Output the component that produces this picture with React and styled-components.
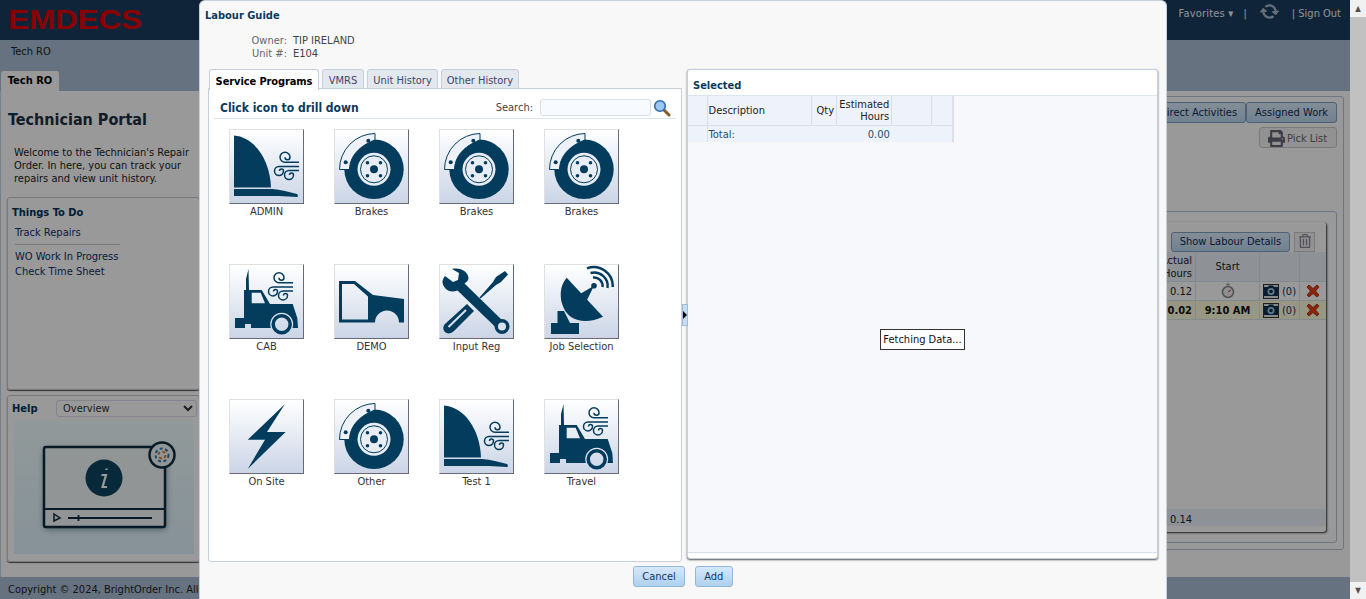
import { FaPrint, FaSyncAlt, FaRegTrashAlt } from 'react-icons/fa'
import styled, { createGlobalStyle } from 'styled-components'

const NAVY = '#033c5c'
const FONT = `"DejaVu Sans Condensed", "DejaVu Sans", sans-serif`

const Wind = ({ x = 0, y = 0 }) => (
	<g transform={`translate(${x} ${y})`} fill="none" stroke={NAVY} strokeWidth="1.5">
		<path d="M70 33.3H56a5 5 0 1 1 5-5a2.5 2.5 0 0 1-5 0" />
		<path d="M70 37.5H50a4.5 4.5 0 1 0 4.5 4.5a2 2 0 0 0-4 0" />
		<path d="M70 41.5H60a4.5 4.5 0 1 0 4.5 4.5a2 2 0 0 0-4 0" />
	</g>
)

const Fairing = () => (
	<>
		<path d="M5 6.5C25 8 41 30 42 58.5H5Z" />
		<path d="M5 60H43C52 60.500 60 63 68 65Q70 67 68 68L50 67H5Z" />
		<Wind />
	</>
)

const Brake = () => (
	<>
		<circle cx="40" cy="40.300" r="29.700" />
		<circle cx="40" cy="40.300" r="16.500" fill="#e8edf5" />
		<circle cx="40" cy="40.300" r="13.500" fill="none" stroke={NAVY} strokeWidth="1" />
		<circle cx="40" cy="40.300" r="4" />
		<circle cx="33.500" cy="33.800" r="1.800" />
		<circle cx="46.500" cy="33.800" r="1.800" />
		<circle cx="33.500" cy="46.800" r="1.800" />
		<circle cx="46.500" cy="46.800" r="1.800" />
		<path
			d="M5.500 40.500A36 36 0 0 1 41 4.500V11C30 15 16 24 15.500 40.500Z"
			fill="#eef2f8"
			stroke={NAVY}
			strokeWidth="1"
		/>
		<circle cx="34.300" cy="11.700" r="2" />
		<circle cx="11.700" cy="33.300" r="2" />
	</>
)

const Truck = () => (
	<>
		<path
			fillRule="evenodd"
			d="M17 15L19.500 5L20 26H32.700L41 40H63.700L68.300 54L69 64H63.600A11.500 11.500 0 1 0 41.800 64H22V60H16V64H6V54H15V26H17ZM22.700 28.700V39.300H36L31.700 28.700Z"
		/>
		<circle cx="52.700" cy="60.300" r="8.500" fill="none" stroke={NAVY} strokeWidth="3.500" />
		<Wind x={-6} y={-14.600} />
	</>
)

const Door = () => (
	<path
		fillRule="evenodd"
		d="M5 17H21L39 31L70 35V58.500H65A12 12 0 0 0 41 58.500H5ZM8 20V55.500H34V32.500L20 20Z"
	/>
)

const Tools = () => (
	<>
		<path d="M6 12L14 18L19 16L20 9L13 5C22 3 29 8 29.500 14C29.500 16 28 18 25.500 19.500L66 59L59.500 66L18.500 26.500C10 30 4 24 3.500 18C3.500 16 4.500 14 6 12Z" />
		<circle cx="63" cy="62.500" r="7.500" />
		<circle cx="63" cy="62.500" r="4" fill="#dbe2ee" />
		<path d="M66 7L69 10.500L62 18L57 21L41.500 34.500L40.500 33.500L54 18L57 13Z" />
		<path d="M28 40L35 47L15 67C12 70 8 70 6 68C3.500 65.500 4 62 6 60Z" />
		<path d="M27 46L9.500 63" stroke="#dbe2ee" strokeWidth="2" />
	</>
)

const Dish = () => (
	<>
		<path d="M22.700 13.700L59 52.700C48 58 36 59 27 53C17 46 12 26 22.700 13.700Z" />
		<path d="M34 34L36 30L50 21.700L43 36L39 40Z" />
		<circle cx="50" cy="21.700" r="2.800" />
		<g fill="none" stroke={NAVY} strokeWidth="2.500">
			<path d="M49 13.500A8.500 8.500 0 0 1 58.500 23" />
			<path d="M46.500 9A13.500 13.500 0 0 1 63.500 24" />
			<path d="M43 4.300A19 19 0 0 1 68.700 23" />
		</g>
		<path d="M13.500 47H20L26 59H35V70H7V59H13.500Z" />
	</>
)

const Bolt = () => <path d="M56 5L18.700 40.700H36L18.700 70L56.600 33H38Z" />

const ICONS = { Fairing, Brake, Truck, Door, Tools, Dish, Bolt }

const PROGRAMS = [
	{ label: 'ADMIN', icon: 'Fairing' },
	{ label: 'Brakes', icon: 'Brake' },
	{ label: 'Brakes', icon: 'Brake' },
	{ label: 'Brakes', icon: 'Brake' },
	{ label: 'CAB', icon: 'Truck' },
	{ label: 'DEMO', icon: 'Door' },
	{ label: 'Input Reg', icon: 'Tools' },
	{ label: 'Job Selection', icon: 'Dish' },
	{ label: 'On Site', icon: 'Bolt' },
	{ label: 'Other', icon: 'Brake' },
	{ label: 'Test 1', icon: 'Fairing' },
	{ label: 'Travel', icon: 'Truck' },
]

function Program({ label, icon }) {
	const Icon = ICONS[icon]
	return (
		<ProgramItem>
			<Tile>
				<svg width="73" height="73" viewBox="1 1 73 73" fill={NAVY}>
					<Icon />
				</svg>
			</Tile>
			<ProgramLabel>{label}</ProgramLabel>
		</ProgramItem>
	)
}

const CameraIcon = () => (
	<svg width="16" height="15" viewBox="0 0 16 15">
		<rect x="0.500" y="0.500" width="15" height="14" fill="#dfe3e8" stroke="#333" />
		<path d="M1 3H5L6 1.500H10L11 3H15V12H1Z" fill="#0b3350" />
		<circle cx="8" cy="7.500" r="3.500" fill="#a8c8e0" />
		<circle cx="8" cy="7.500" r="1.800" fill="#0b3350" />
	</svg>
)

const RedX = () => (
	<svg width="16" height="16" viewBox="0 0 16 16">
		<path
			d="M2 4L4 2L8 5.500L12 2L14 4L10.500 8L14 12L12 14L8 10.500L4 14L2 12L5.500 8Z"
			fill="#f03a10"
			stroke="#8a2a10"
			strokeWidth="0.800"
		/>
	</svg>
)

const Stopwatch = () => (
	<svg width="14" height="16" viewBox="0 0 14 16" fill="none">
		<rect x="5.500" y="0.500" width="3" height="2" fill="#999" />
		<circle cx="7" cy="9" r="5.500" fill="#eee" stroke="#888" strokeWidth="1.500" />
		<path d="M7 9L10 7" stroke="#c33" />
	</svg>
)

const Magnifier = () => (
	<svg width="18" height="18" viewBox="0 0 18 18">
		<path d="M10.500 10.500L16 16" stroke="#8a5a2a" strokeWidth="3" strokeLinecap="round" />
		<circle cx="7" cy="7" r="5.300" fill="#9cc8f0" stroke="#2a6cb0" strokeWidth="1.600" />
	</svg>
)

const HelpArt = () => (
	<svg width="180" height="134" viewBox="0 0 180 134">
		<defs>
			<linearGradient id="helpBg" x1="0" y1="0" x2="0" y2="1">
				<stop offset="0" stopColor="#f2ffff" />
				<stop offset="1" stopColor="#e0f4ff" />
			</linearGradient>
			<filter id="helpShadow" x="-20%" y="-20%" width="140%" height="140%">
				<feGaussianBlur stdDeviation="3" />
			</filter>
		</defs>
		<rect width="180" height="134" fill="url(#helpBg)" />
		<rect x="30" y="29" width="122" height="80" rx="2" fill="#0d2a3a" opacity="0.5" filter="url(#helpShadow)" />
		<rect x="30" y="27" width="121" height="80" rx="2" fill="#f4f8f8" stroke="#0e2c40" strokeWidth="2.500" />
		<path d="M30 89H151" stroke="#0e2c40" strokeWidth="2" />
		<circle cx="90" cy="58" r="18.500" fill="#0e4560" />
		<path d="M92.500 48.500v1.500M87.500 55H92L88.500 67H93" fill="none" stroke="#fff" strokeWidth="2.200" />
		<path d="M40 94L46 98L40 101Z" fill="none" stroke="#0e2c40" strokeWidth="1.500" />
		<path d="M54 98H138M64.500 95V101" stroke="#0e2c40" strokeWidth="1.800" />
		<circle cx="148" cy="35" r="12.500" fill="#f4f8f8" stroke="#0e2c40" strokeWidth="2.500" />
		<g fill="none" strokeWidth="2" strokeDasharray="3 2.500">
			<circle cx="148" cy="35" r="6.500" stroke="#2a7fb0" />
			<circle cx="148" cy="35" r="3.500" stroke="#e07a30" />
		</g>
	</svg>
)

const COLS = [19, 104, 25, 55, 40, 21]

const EstimateRow = ({ cells, head }) => {
	const Cell = head ? HeadCell : BodyCell
	return (
		<tr>
			{cells.map((c, i) => (
				<Cell key={i} $w={COLS[i]} $left={i === 1}>
					{c}
				</Cell>
			))}
		</tr>
	)
}

export default function App() {
	return (
		<Page>
			<GlobalStyle />
			<Viewport>
				<Header>
					<Logo width="136" height="34" viewBox="0 0 136 34">
						<text x="0" y="25" textLength="134" lengthAdjust="spacingAndGlyphs">
							EMDECS
						</text>
					</Logo>
					<UserMenu>
						<Favorites>Favorites ▾</Favorites>
						<Pipe>|</Pipe>
						<SyncIcon size={15} />
						<SignOut>| Sign Out</SignOut>
					</UserMenu>
				</Header>
				<Nav>
					<NavLabel>Tech RO</NavLabel>
					<PageTab>Tech RO</PageTab>
				</Nav>
				<Content>
					<Sidebar>
						<PortalTitle>Technician Portal</PortalTitle>
						<Intro>
							Welcome to the Technician's Repair Order. In here, you can track your repairs and view unit
							history.
						</Intro>
						<TodoBox>
							<BoxTitle>Things To Do</BoxTitle>
							<TodoLink>Track Repairs</TodoLink>
							<TodoRule />
							<TodoLink>WO Work In Progress</TodoLink>
							<TodoLink>Check Time Sheet</TodoLink>
						</TodoBox>
						<HelpBox>
							<HelpHead>
								<BoxTitle>Help</BoxTitle>
								<HelpSelect defaultValue="Overview">
									<option>Overview</option>
								</HelpSelect>
							</HelpHead>
							<HelpArt />
						</HelpBox>
					</Sidebar>
					<Work>
						<WorkTabs>
							<WorkTab>Indirect Activities</WorkTab>
							<WorkTab>Assigned Work</WorkTab>
						</WorkTabs>
						<PickList>
							<FaPrint size={17} />
							Pick List
						</PickList>
						<Nested>
							<Card>
								<CardTools>
									<DetailsButton>Show Labour Details</DetailsButton>
									<TrashButton>
										<FaRegTrashAlt size={14} />
									</TrashButton>
								</CardTools>
								<WorkGrid $head>
									<ActualHead>
										Actual
										<br />
										Hours
									</ActualHead>
									<span>Start</span>
									<span />
									<span />
								</WorkGrid>
								<WorkGrid>
									<HoursCell>0.12</HoursCell>
									<span>
										<Stopwatch />
									</span>
									<PhotoCell>
										<CameraIcon /> (0)
									</PhotoCell>
									<span>
										<RedX />
									</span>
								</WorkGrid>
								<WorkGrid $active>
									<HoursCell>0.02</HoursCell>
									<span>9:10 AM</span>
									<PhotoCell>
										<CameraIcon /> (0)
									</PhotoCell>
									<span>
										<RedX />
									</span>
								</WorkGrid>
								<CardTotal>0.14</CardTotal>
							</Card>
						</Nested>
					</Work>
				</Content>
				<Footer>Copyright © 2024, BrightOrder Inc. All Rights Reserved.</Footer>
				<Dim />
				<Modal>
					<ModalTitle>Labour Guide</ModalTitle>
					<UnitInfo>
						<dt>Owner:</dt>
						<dd>TIP IRELAND</dd>
						<dt>Unit #:</dt>
						<dd>E104</dd>
					</UnitInfo>
					<ModalBody>
						<LeftColumn>
							<Tabs>
								<Tab $active $w={110}>
									Service Programs
								</Tab>
								<Tab $w={42}>VMRS</Tab>
								<Tab $w={71}>Unit History</Tab>
								<Tab $w={78}>Other History</Tab>
							</Tabs>
							<ProgramsPanel>
								<DrillBar>
									<DrillTitle>Click icon to drill down</DrillTitle>
									<SearchLabel>Search:</SearchLabel>
									<SearchInput />
									<Magnifier />
								</DrillBar>
								<ProgramGrid>
									{PROGRAMS.map((p, i) => (
										<Program key={i} {...p} />
									))}
								</ProgramGrid>
							</ProgramsPanel>
						</LeftColumn>
						<Handle>
							<HandleArrow />
						</Handle>
						<SelectedPanel>
							<SelectedTitle>Selected</SelectedTitle>
							<SelectedBody>
								<EstimateTable>
									<thead>
										<EstimateRow
											head
											cells={[
												'',
												'Description',
												'Qty',
												<>
													Estimated
													<br />
													Hours
												</>,
												'',
												'',
											]}
										/>
									</thead>
									<tbody>
										<EstimateRow cells={['', 'Total:', '', '0.00', '', '']} />
									</tbody>
								</EstimateTable>
								<Fetching>Fetching Data...</Fetching>
							</SelectedBody>
							<SelectedFoot />
						</SelectedPanel>
					</ModalBody>
					<ModalActions>
						<ActionButton>Cancel</ActionButton>
						<ActionButton>Add</ActionButton>
					</ModalActions>
				</Modal>
			</Viewport>
			<Scrollbar>
				<ScrollArrow>▲</ScrollArrow>
				<ScrollThumb />
				<ScrollArrow>▼</ScrollArrow>
			</Scrollbar>
		</Page>
	)
}

const GlobalStyle = createGlobalStyle`
	html, body {
		margin: 0;
		height: 100%;
		overflow: hidden;
	}
	body {
		font-family: ${FONT};
		font-size: 11px;
		color: #222;
	}
	* {
		box-sizing: border-box;
	}
`
const Page = styled.div`
	display: flex;
	height: 599px;
	overflow: hidden;
`
const Viewport = styled.div`
	position: relative;
	flex: 1;
	display: flex;
	flex-direction: column;
	min-width: 0;
	background: #fff;
`
const Header = styled.header`
	height: 40px;
	flex: none;
	display: flex;
	justify-content: space-between;
	background: #193c5f;
	padding: 4px 9px 0 8px;
`
const Logo = styled.svg`
	font-family: 'Liberation Sans', sans-serif;
	font-size: 28px;
	font-weight: 700;
	fill: #e60000;
`
const UserMenu = styled.div`
	display: flex;
	align-items: flex-start;
	gap: 10px;
	padding-top: 3px;
	color: #f0f4f8;
	line-height: 13px;
`
const Favorites = styled.span`
	letter-spacing: 0.2px;
`
const SyncIcon = styled(FaSyncAlt)`
	margin: -3px 0 0 -1px;
	color: #a8b8c8;
	transform: rotate(40deg);
`
const Pipe = styled.span`
	margin: 0 6px 0 0;
`
const SignOut = styled.span`
	margin-left: 5px;
`
const Nav = styled.nav`
	height: 51px;
	flex: none;
	display: flex;
	flex-direction: column;
	justify-content: space-between;
	background: #aabfd5;
`
const NavLabel = styled.div`
	padding: 5px 0 0 11px;
	line-height: 13px;
`
const PageTab = styled.div`
	width: 58px;
	height: 20px;
	margin-left: 1px;
	text-align: center;
	line-height: 20px;
	font-weight: 700;
	color: #000;
	background: #fff;
	border-radius: 3px 3px 0 0;
`
const Content = styled.main`
	flex: 1;
	min-height: 0;
	display: flex;
	background: #fff;
	border-left: 1px solid #c8d4e0;
`
const Sidebar = styled.aside`
	width: 199px;
	flex: none;
	display: flex;
	flex-direction: column;
	padding: 18px 0 0 6px;
`
const PortalTitle = styled.h1`
	margin: 0 0 15px 1px;
	font-size: 16px;
	line-height: 22px;
	font-weight: 700;
	color: #1e2f44;
`
const Intro = styled.p`
	margin: 0 0 12px 7px;
	width: 176px;
	line-height: 13px;
`
const TodoBox = styled.section`
	height: 193px;
	padding: 8px 4px;
	border: 1px solid #c5ccd3;
	border-radius: 3px;
	box-shadow: 0 1px 1px #555;
`
const BoxTitle = styled.h3`
	margin: 0;
	font-size: 11px;
	line-height: 14px;
	font-weight: 700;
	color: #013356;
`
const TodoLink = styled.div`
	margin-left: 3px;
	line-height: 15px;
	color: #0d3268;
	&:first-of-type {
		margin-top: 5px;
	}
`
const TodoRule = styled.hr`
	width: 105px;
	margin: 4px 0 4px 3px;
	border: 0;
	border-top: 1px solid #c8c8c8;
`
const HelpBox = styled.section`
	height: 167px;
	margin-top: 5px;
	padding: 4px 6px;
	border: 1px solid #c5ccd3;
	border-radius: 3px;
	box-shadow: 0 1px 1px #555;
`
const HelpHead = styled.div`
	display: flex;
	align-items: center;
	justify-content: space-between;
	margin: 0 -4px 3px -2px;
`
const HelpSelect = styled.select`
	width: 141px;
	height: 17px;
	padding: 0 0 0 2px;
	font: inherit;
	color: #333;
	background: #fff;
	border: 1px solid #dde;
	border-radius: 3px;
`
const Work = styled.section`
	flex: 1;
	min-width: 0;
	display: flex;
	flex-direction: column;
	align-items: flex-end;
	margin: 5px 6px 27px 6px;
	padding: 5px 6px 6px;
	border: 1px solid #b7c5d4;
	border-radius: 3px;
`
const WorkTabs = styled.div`
	display: flex;
`
const WorkTab = styled.button`
	height: 21px;
	padding: 0 8px;
	font: inherit;
	color: #0f2d55;
	background: linear-gradient(#dcecfb, #bcd7f0);
	border: 1px solid #7fa2c4;
	border-radius: 3px;
`
const PickList = styled.button`
	display: flex;
	align-items: center;
	gap: 2px;
	width: 78px;
	height: 21px;
	margin-top: 4px;
	padding: 1px 8px 0;
	font: inherit;
	color: #666;
	background: #f4f4f4;
	border: 1px solid #ccc;
	border-radius: 3px;
	svg {
		flex: none;
		color: #667;
	}
`
const Nested = styled.div`
	flex: 1;
	align-self: stretch;
	margin: 63px 0 0;
	padding: 10px 10px 10px 0;
	border: 1px solid #b7c5d4;
	border-radius: 3px;
`
const Card = styled.div`
	height: 100%;
	display: flex;
	flex-direction: column;
	background: #fff;
	border-radius: 3px;
	box-shadow: 1px 1px 2px #333;
`
const CardTools = styled.div`
	display: flex;
	justify-content: flex-end;
	gap: 4px;
	padding: 10px 11px 0 0;
`
const DetailsButton = styled.button`
	width: 119px;
	height: 20px;
	padding: 0 0 2px;
	font: inherit;
	color: #0f2d55;
	background: linear-gradient(#dcecfb, #bcd7f0);
	border: 1px solid #7fa2c4;
	border-radius: 3px;
`
const TrashButton = styled.button`
	width: 21px;
	height: 20px;
	padding: 0;
	color: #889;
	background: #f4f4f4;
	border: 1px solid #ccc;
`
const WorkGrid = styled.div`
	display: grid;
	grid-template-columns: 1fr 64px 40px 27px;
	align-items: center;
	height: ${p => (p.$head ? '30px' : '19px')};
	text-align: center;
	font-weight: ${p => (p.$active ? 700 : 400)};
	background: ${p => (p.$head ? '#edf3fa' : p.$active ? '#fcfcda' : '#fff')};
	border-bottom: 1px solid #dde4ec;
	color: ${p => (p.$active ? '#111' : '#222')};
	> span {
		display: flex;
		align-items: center;
		justify-content: center;
		height: 100%;
		border-left: 1px solid #dde4ec;
	}
`
const ActualHead = styled.div`
	text-align: right;
	padding-right: 3px;
	line-height: 13px;
`
const HoursCell = styled.div`
	text-align: right;
	padding-right: 3px;
`
const PhotoCell = styled.span`
	gap: 3px;
	font-weight: 400;
	color: #0d3268;
`
const CardTotal = styled.div`
	margin-top: auto;
	margin-bottom: 6px;
	height: 17px;
	padding: 2px 134px 0 0;
	text-align: right;
	line-height: 17px;
	background: #edf3fa;
	color: #123;
`
const Footer = styled.footer`
	height: 22px;
	flex: none;
	padding: 6px 0 0 8px;
	background: #aabfd5;
	color: #222;
	line-height: 13px;
`
const Dim = styled.div`
	position: absolute;
	inset: 0;
	background: rgba(0, 0, 0, 0.4);
`
const Modal = styled.div`
	position: absolute;
	left: 199px;
	top: 0;
	width: 968px;
	height: 599px;
	display: flex;
	flex-direction: column;
	background: #f8f8f8;
	border: 1px solid #c5d0dc;
	border-bottom: 0;
	border-radius: 6px 6px 0 0;
`
const ModalTitle = styled.h2`
	margin: 0;
	padding: 8px 0 0 5px;
	font-size: 11px;
	line-height: 14px;
	font-weight: 700;
	color: #0a3a5c;
`
const UnitInfo = styled.dl`
	display: grid;
	grid-template-columns: 81px auto;
	grid-auto-rows: 13px;
	column-gap: 6px;
	justify-content: start;
	align-content: start;
	margin: 11px 0 0 6px;
	height: 27px;
	line-height: 13px;
	color: #444;
	dt {
		text-align: right;
		color: #666;
	}
	dd {
		margin: 0;
	}
`
const ModalBody = styled.div`
	display: flex;
	align-items: flex-start;
	margin-top: 8px;
	padding: 0 8px;
`
const LeftColumn = styled.div`
	width: 474px;
	flex: none;
	display: flex;
	flex-direction: column;
`
const Tabs = styled.div`
	display: flex;
	gap: 3px;
	height: 20px;
	padding-left: 1px;
	margin-bottom: -1px;
	position: relative;
	z-index: 1;
`
const Tab = styled.div`
	display: flex;
	align-items: center;
	justify-content: center;
	width: ${p => p.$w}px;
	height: ${p => (p.$active ? 21 : 20)}px;
	padding-top: 2px;
	letter-spacing: ${p => (p.$active ? '-0.1px' : 0)};
	color: ${p => (p.$active ? '#000' : '#446')};
	font-weight: ${p => (p.$active ? 700 : 400)};
	background: ${p => (p.$active ? '#fff' : '#e3e8ee')};
	border: 1px solid #c5d0dc;
	border-bottom: ${p => (p.$active ? 0 : '1px solid #c5d0dc')};
	border-radius: 3px 3px 0 0;
`
const ProgramsPanel = styled.div`
	height: 474px;
	padding: 0 5px;
	background: #fff;
	border: 1px solid #c5d0dc;
	border-radius: 0 0 3px 3px;
`
const DrillBar = styled.div`
	display: flex;
	align-items: center;
	height: 30px;
	padding: 8px 5px 0 6px;
	border-bottom: 1px solid #dde4ec;
`
const DrillTitle = styled.div`
	flex: 1;
	font-size: 12px;
	font-weight: 700;
	color: #0a3a5c;
`
const SearchLabel = styled.label`
	margin-right: 7px;
	color: #444;
`
const SearchInput = styled.input`
	width: 111px;
	height: 17px;
	margin-right: 2px;
	background: #f7fbff;
	border: 1px solid #d8e0e8;
	border-radius: 3px;
`
const ProgramGrid = styled.div`
	display: grid;
	grid-template-columns: repeat(4, 75px);
	grid-auto-rows: 135px;
	column-gap: 30px;
	padding: 10px 0 0 15px;
`
const ProgramItem = styled.div`
	display: flex;
	flex-direction: column;
	align-items: center;
`
const Tile = styled.div`
	width: 75px;
	height: 75px;
	background: linear-gradient(#ffffff, #cbd5e6);
	border: 1px solid;
	border-color: #e0e0e0 #666a78 #666a78 #e0e0e0;
`
const ProgramLabel = styled.div`
	margin-top: 1px;
	white-space: nowrap;
	line-height: 13px;
	color: #333;
`
const Handle = styled.div`
	width: 6px;
	height: 22px;
	flex: none;
	display: flex;
	align-items: center;
	margin-top: 235px;
	background: #c5dcf3;
	border: 1px solid #9dbde0;
	position: relative;
	z-index: 1;
`
const HandleArrow = styled.i`
	border-left: 4px solid #000;
	border-top: 4px solid transparent;
	border-bottom: 4px solid transparent;
`
const SelectedPanel = styled.section`
	position: relative;
	width: 471px;
	height: 490px;
	margin-left: -1px;
	display: flex;
	flex-direction: column;
	background: #fff;
	border: 1px solid #c5d0dc;
	border-radius: 3px;
	box-shadow: 0 1px 2px #555;
`
const SelectedTitle = styled.h3`
	height: 26px;
	margin: 0;
	padding: 9px 0 0 5px;
	font-size: 11px;
	line-height: 14px;
	font-weight: 700;
	color: #0a3a5c;
	border-bottom: 1px solid #dde4ec;
`
const SelectedBody = styled.div`
	flex: 1;
	background: #f6f8fc;
`
const SelectedFoot = styled.div`
	height: 6px;
	border-top: 1px solid #d5dfe8;
`
const EstimateTable = styled.table`
	table-layout: fixed;
	width: 266px;
	border-collapse: collapse;
	border-right: 2px solid #dde;
	font-size: 11px;
`
const HeadCell = styled.th`
	width: ${p => p.$w}px;
	height: 29px;
	padding: 2px 2px 0 ${p => (p.$left ? 1 : 2)}px;
	font-weight: 400;
	line-height: 12px;
	text-align: ${p => (p.$left ? 'left' : 'right')};
	color: #222;
	background: #eef2fa;
	border-right: 1px solid #d8dfe8;
	border-bottom: 1px solid #d8dfe8;
`
const BodyCell = styled.td`
	width: ${p => p.$w}px;
	height: 17px;
	padding: 2px 2px 0 ${p => (p.$left ? 1 : 2)}px;
	line-height: 13px;
	text-align: ${p => (p.$left ? 'left' : 'right')};
	color: #244f70;
	background: #eef2fa;
	&:first-child {
		border-right: 1px solid #d8dfe8;
	}
`
const Fetching = styled.div`
	position: absolute;
	left: 192px;
	top: 259px;
	width: 85px;
	height: 21px;
	text-align: center;
	line-height: 19px;
	color: #111;
	background: #fff;
	border: 1px solid #333;
`
const ModalActions = styled.div`
	display: flex;
	justify-content: center;
	gap: 10px;
	margin-top: 4px;
`
const ActionButton = styled.button`
	height: 21px;
	min-width: 38px;
	padding: 0 8px;
	font: inherit;
	color: #123a5c;
	background: linear-gradient(#d6e8fa, #aed0f0);
	border: 1px solid #93b7da;
	border-radius: 3px;
`
const Scrollbar = styled.div`
	width: 16px;
	flex: none;
	display: flex;
	flex-direction: column;
	background: #f1f1f1;
`
const ScrollArrow = styled.div`
	height: 17px;
	font-size: 8px;
	line-height: 17px;
	text-align: center;
	color: #505050;
`
const ScrollThumb = styled.div`
	flex: 1;
	background: #c1c1c1;
`
